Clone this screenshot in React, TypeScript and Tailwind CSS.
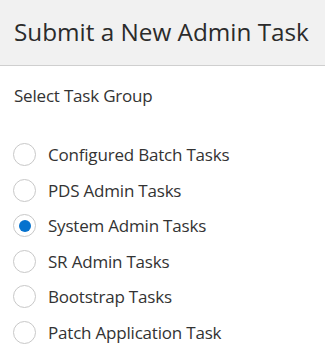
import { useState } from 'react'

const GROUPS = [
  'Configured Batch Tasks',
  'PDS Admin Tasks',
  'System Admin Tasks',
  'SR Admin Tasks',
  'Bootstrap Tasks',
  'Patch Application Task',
]

export default function App() {
  const [selected, setSelected] = useState('System Admin Tasks')

  return (
    <div className="h-[359px] w-[325px] overflow-hidden bg-white font-['Open_Sans',sans-serif] text-[#333]">
      <header className="flex h-[66px] items-center border-b border-[#cfcfcf] bg-[#f1f1f1] px-[14px]">
        <h1 className="text-[24.3px] leading-none text-[#2b2b2b]">Submit a New Admin Task</h1>
      </header>

      <div className="px-[13px] pt-[19px]">
        <p className="pl-px text-[17px] leading-[22px] tracking-[-0.2px]">Select Task Group</p>

        <div className="mt-[30px] flex flex-col" role="radiogroup">
          {GROUPS.map((g) => {
            const on = g === selected
            return (
              <label
                key={g}
                className="flex h-[35.5px] cursor-pointer items-center gap-[12px]"
                onClick={() => setSelected(g)}
              >
                <span className="flex h-[23px] w-[23px] shrink-0 items-center justify-center rounded-full border-[1.5px] border-[#c8c8c8] bg-white">
                  {on && <span className="h-[12px] w-[12px] rounded-full bg-[#0572ce]" />}
                </span>
                <span className="text-[17px] tracking-[-0.2px]">{g}</span>
              </label>
            )
          })}
        </div>
      </div>
    </div>
  )
}
